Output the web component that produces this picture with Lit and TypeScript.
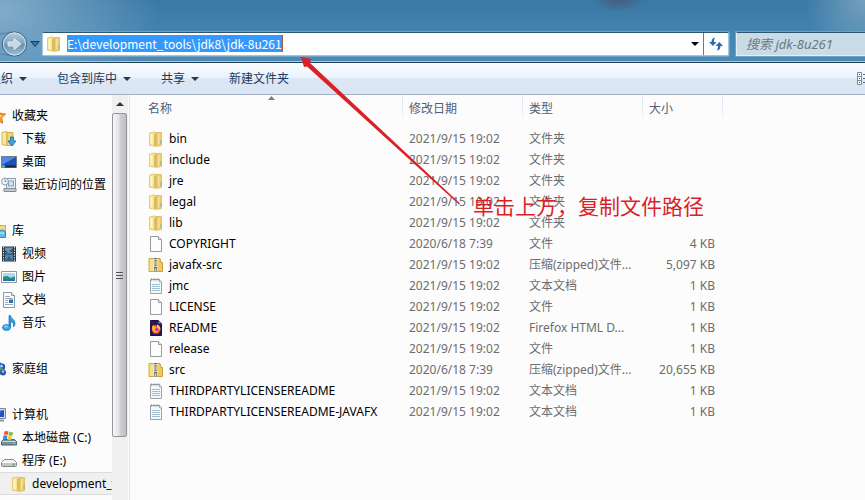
import { LitElement, html, css, svg, nothing } from "lit";
import { customElement } from "lit/decorators.js";

type Icon = keyof typeof icons;

const icons = {
  folder: svg`
    <path d="M1.500 2 7 .8l1 1v13.500l-6.500-1z" fill="#f7e28e" stroke="#e2c468" stroke-width=".8"/>
    <path d="M8 1.500h5.500v13L8 15.300z" fill="#ecd070" stroke="#dcba5a" stroke-width=".8"/>
    <path d="M6 3.500 9 1.500v12L6 15.300z" fill="#d9bd66"/>
    <path d="M2.500 3h2v10.500l-2-.5z" fill="#fff6c4"/>
    <path d="M10 3h1.500v10H10z" fill="#f6e193"/>
    <path d="M13 9v4" stroke="#7fb3a2"/>`,
  file: svg`
    <path d="M2.500.5h8l3 3v12h-11z" fill="#fdfdfd" stroke="#9a9a9a"/>
    <path d="M10.500.5v3h3" fill="#eee" stroke="#9a9a9a"/>`,
  zip: svg`
    <path d="M1 1.500h7v13H1z" fill="#f7df83" stroke="#d0a845"/>
    <path d="M8 1.500h4l1 4h1.500v9H8z" fill="#ecca62" stroke="#c99d3c"/>
    <path d="M7.500 1v14" stroke="#fffbe4" stroke-width="3.500"/>
    <path d="M7.500 1v10" stroke="#555" stroke-width="2.600" stroke-dasharray="1.200 1"/>
    <path d="M6.500 11h2v3.500h-2z" fill="#d9d9d9" stroke="#666" stroke-width=".7"/>`,
  text: svg`
    <path d="M2.500 1.500h9l2 2v12h-11z" fill="#f3f8fb" stroke="#9aa3aa"/>
    <path d="M4 6.500h8M4 8.500h8M4 10.500h8M4 12.500h8" stroke="#a3bfd2"/>
    <path d="M3 1.500h9" stroke="#888" stroke-width="2" stroke-dasharray="1 1.200"/>
    <path d="M11.500 1.500v2.500h2" fill="#fff" stroke="#999" stroke-width=".8"/>`,
  firefox: svg`
    <path d="M2.500.5h8l3 3v12h-11z" fill="#2a1a55" stroke="#1d123b"/>
    <path d="M10.500.5v3h3z" fill="#8d83ad"/>
    <circle cx="8" cy="9.500" r="4.200" fill="#ff5a35"/>
    <path d="M4 6.500c1-1 1-1 2-1.500 0 2 2 2 3 3s2 3 0 4-5-1-5-5.500z" fill="#ffb52d"/>
    <path d="M9 4.500c3 1 4 4 3 6-1-2-2-3-3-3z" fill="#ffcf3f"/>
    <circle cx="8.500" cy="9.500" r="1.500" fill="#8b3ac9"/>`,
  star: svg`<path d="m8 .5 2.300 5 5.200.6-3.900 3.700 1 5.300L8 12.500l-4.600 2.600 1-5.300L.5 6.100l5.200-.6z" fill="#fb9b2c" stroke="#dd6a12"/><path d="m8 3 1.500 4 3.500.4-3 2z" fill="#ffd65a"/>`,
  download: svg`
    <path d="M1 1.500 6 .5v14l-5-1z" fill="#f9e9a5" stroke="#d7b653"/>
    <path d="M6 1.500h6v13H6z" fill="#efd57c" stroke="#d1ab4a"/>
    <path d="M9.500 6h3v4h2.500l-4 5-4-5h2.500z" fill="#3aa6e8" stroke="#1565a8" stroke-width=".8"/>`,
  desktop: svg`
    <path d="M.5 2.500h15v11H.5z" fill="#1f4fb4" stroke="#6f7f91"/>
    <path d="M1 3h14L1 11z" fill="#4f8be6"/>
    <path d="M1 12.500h14" stroke="#16264a" stroke-width="2"/>
    <path d="M1 12.500h3" stroke="#74c4a0" stroke-width="2"/>`,
  recent: svg`
    <path d="M5.500 1.500h9v10h-9z" fill="#e8eef3" stroke="#8d9aa6"/>
    <path d="M7.500 4h5v5h-5z" fill="#cfe2f0" stroke="#5d8fb8" stroke-width=".8"/>
    <path d="M3 11.500h12v3H3z" fill="#c1c6cb" stroke="#858c93"/>
    <circle cx="4" cy="4.500" r="3.400" fill="#f4f7f9" stroke="#8d9aa6"/>
    <path d="M4 2.500v2h1.500" fill="none" stroke="#4e6275" stroke-width=".8"/>`,
  library: svg`
    <path d="M1.500 2.500h14v11h-14z" fill="#f1dc83" stroke="#c9a848"/>
    <path d="M8.500 8.500q4-3 7 0v6h-7z" fill="#63bfe6" stroke="#2d86b5"/>
    <path d="M10 10h4" stroke="#c9eefc"/>`,
  video: svg`
    <path d="M1 .5h14v15H1z" fill="#303840"/>
    <path d="M4 1.500h8v6H4z" fill="#4d9fd8"/><path d="M4 8.500h8v6H4z" fill="#3d8cc9"/>
    <path d="m4 4 3 2-3 2zM12 2l-4 3 4 2zM5 14l3-4 3 4z" fill="#76483a"/>
    <path d="M2.500 1v14M13.500 1v14" stroke="#dce7ee" stroke-dasharray="1.300 1.200"/>`,
  picture: svg`
    <path d="M.5 2.500h15v11H.5z" fill="#fff" stroke="#8d979f"/>
    <path d="M2 4h12v8H2z" fill="#a9dbf3"/>
    <path d="M2 8q4-2 6 0t6-1v5H2z" fill="#2d8c86"/>
    <path d="M2 11q6-2 12 0v1H2z" fill="#2a6fa8"/>`,
  document: svg`
    <path d="M2.500.5h8l3 3v12h-11z" fill="#fbfcfd" stroke="#8c98a3"/>
    <path d="M10.500.5v3h3" fill="#dfe6ec" stroke="#8c98a3"/>
    <path d="M4 4.500h5M4 6.500h8M4 8.500h3M4 10.500h3M4 12.500h8" stroke="#9badbd"/>
    <path d="M8 7.500h4v3.500H8z" fill="#2e6db5"/>`,
  music: svg`
    <path d="M8 .5h1.500c0 3 4.500 4 4.500 8 0 1.500-.6 2.500-1.500 3.500.8-3-.5-4.500-3-5.500v6H8z" fill="#2a9be0" stroke="#1673b8" stroke-width=".7"/>
    <ellipse cx="5.500" cy="12.500" rx="4" ry="3" fill="#36a7e8" stroke="#1673b8" stroke-width=".7"/>
    <ellipse cx="5" cy="11.500" rx="2" ry="1" fill="#8bd2f8"/>`,
  homegroup: svg`
    <circle cx="8" cy="4" r="3.500" fill="#3f7ed0"/><circle cx="11.500" cy="6" r="3.700" fill="#2c55c0"/>
    <circle cx="10" cy="10" r="3.500" fill="#4aa948"/><circle cx="13" cy="11.500" r="3" fill="#2e4fc2"/>
    <circle cx="11.500" cy="5" r="1.500" fill="#a6c8ff"/><circle cx="13" cy="10.500" r="1.200" fill="#a6c8ff"/>`,
  computer: svg`
    <path d="M1.500 1.500h14v10h-14z" fill="#d8dde3" stroke="#7d8893"/>
    <path d="M3 3h11v7H3z" fill="#2553c4"/><path d="M3 3h11L3 8z" fill="#6c9cf0"/>
    <path d="M4 13.500h10" stroke="#8e98a2" stroke-width="2"/>`,
  windisk: svg`
    <path d="M2.500 9.500h11l2 2v3.500H.5v-3.500z" fill="#71949b" stroke="#47666e"/>
    <path d="M1 11.500h14" stroke="#c7dce0"/><path d="M12 13.500h2" stroke="#8df06c"/>
    <path d="M3.500 1.500q2-1 4 0l-.8 3.500q-2-1-4 0z" fill="#ef5a28"/>
    <path d="M8.200 1.800q2 1 4 0l-.8 3.500q-2 1-4 0z" fill="#7dbb35"/>
    <path d="M2.500 5.700q2-1 4 0l-.8 3.500q-2-1-4 0z" fill="#2c8fd8"/>
    <path d="M7.200 6q2 1 4 0l-.8 3.500q-2 1-4 0z" fill="#fbc22b"/>`,
  disk: svg`
    <path d="M3.500 6.500h9l3 3v3q0 1-1 1h-13q-1 0-1-1v-3z" fill="#f1f2f3" stroke="#85898d"/>
    <path d="M1 9.500h14v3.500H1z" fill="#c2c6c9"/><path d="M1 9.500h14" stroke="#fafafa"/>
    <path d="M12.500 10.500v2" stroke="#3fae3c" stroke-width="1.500"/>`,
};

const glyph = (name: Icon) =>
  html`<svg class="icon" viewBox="0 0 16 16" aria-hidden="true">${icons[name]}</svg>`;

const groups: { icon: Icon; label: string; items: { icon: Icon; label: string }[] }[] = [
  { icon: "star", label: "收藏夹", items: [
    { icon: "download", label: "下载" },
    { icon: "desktop", label: "桌面" },
    { icon: "recent", label: "最近访问的位置" },
  ] },
  { icon: "library", label: "库", items: [
    { icon: "video", label: "视频" },
    { icon: "picture", label: "图片" },
    { icon: "document", label: "文档" },
    { icon: "music", label: "音乐" },
  ] },
  { icon: "homegroup", label: "家庭组", items: [] },
  { icon: "computer", label: "计算机", items: [
    { icon: "windisk", label: "本地磁盘 (C:)" },
    { icon: "disk", label: "程序 (E:)" },
  ] },
];

const recent = "2021/9/15 19:02";
const older = "2020/6/18 7:39";
const files: [Icon, string, string, string, string][] = [
  ["folder", "bin", recent, "文件夹", ""],
  ["folder", "include", recent, "文件夹", ""],
  ["folder", "jre", recent, "文件夹", ""],
  ["folder", "legal", recent, "文件夹", ""],
  ["folder", "lib", recent, "文件夹", ""],
  ["file", "COPYRIGHT", older, "文件", "4 KB"],
  ["zip", "javafx-src", recent, "压缩(zipped)文件...", "5,097 KB"],
  ["text", "jmc", recent, "文本文档", "1 KB"],
  ["file", "LICENSE", recent, "文件", "1 KB"],
  ["firefox", "README", recent, "Firefox HTML D...", "1 KB"],
  ["file", "release", recent, "文件", "1 KB"],
  ["zip", "src", older, "压缩(zipped)文件...", "20,655 KB"],
  ["text", "THIRDPARTYLICENSEREADME", recent, "文本文档", "1 KB"],
  ["text", "THIRDPARTYLICENSEREADME-JAVAFX", recent, "文本文档", "1 KB"],
];

const shared = css`
  :host, * { box-sizing: border-box; }
  button, input { font: inherit; margin: 0; padding: 0; border: 0; background: none; }
  .icon { width: 16px; height: 16px; flex: none; display: block; }
`;

@customElement("address-bar")
class AddressBar extends LitElement {
  static styles = [shared, css`
    :host {
      display: flex; align-items: center; height: 63px; padding-top: 25px; flex: none;
      border-bottom: 1px solid #23435d; box-shadow: inset 0 -1px #a5c9e0; overflow: hidden;
      background:
        radial-gradient(ellipse 26px 12px at 618px 0, #4a5575cc, #4a557500),
        radial-gradient(ellipse 160px 100px at 0 10px, #8db4cedd, #8db4ce00),
        radial-gradient(ellipse 60px 60px at 100% 0, #84aac4cc, #84aac400),
        linear-gradient(#3a78a5, #4485b2 60%, #4b8ab5);
    }
    .forward { width: 28px; height: 28px; flex: none; }
    .forward svg { display: block; }
    .history { width: 10px; height: 8px; margin: 0 2px; flex: none; display: flex; }
    .path {
      flex: 1; min-width: 0; height: 24px; display: flex; align-items: center;
      background: #fff; border: 1px solid #9fc6df; border-top-color: #2c5572;
      border-radius: 2px; padding-left: 3px; box-shadow: 0 0 0 1px #6fa3c6;
    }
    .address {
      height: 17px; margin-left: 5px; color: #fff; background: #39f; line-height: 17px;
      field-sizing: content; border-right: 1px solid #a05a3c; outline: 0;
      font-family: "Noto Sans CJK SC", sans-serif; font-size: 12px;
    }
    .drop { margin-left: auto; width: 16px; height: 22px; display: grid; place-items: center; }
    .refresh { width: 25px; height: 22px; border-left: 1px solid #5d7d93; display: grid; place-items: center; }
    .search {
      width: 129px; height: 24px; margin-left: 7px; padding-left: 9px; flex: none;
      background: #cadbe8; border: 1px solid #e3eef6; border-top-color: #2c5572;
      border-right: 0; box-shadow: 0 0 0 1px #6fa3c6; font-style: italic; font-size: 13px; outline: 0;
    }
    .search::placeholder { color: #6b7681; opacity: 1; }
  `];
  render() {
    return html`
      <button class="forward" aria-label="前进">
        <svg width="28" height="28" viewBox="0 0 28 28">
          <defs><linearGradient id="g" x2="0" y2="1"><stop stop-color="#b9cddb"/><stop offset=".5" stop-color="#7fa3bd"/><stop offset=".52" stop-color="#668fae"/><stop offset="1" stop-color="#a3c4da"/></linearGradient></defs>
          <path d="M0 4Q6 4 9 2M0 24q6 0 9 2" fill="none" stroke="#54809f"/>
          <circle cx="14.500" cy="14" r="12.200" fill="url(#g)" stroke="#3d6684"/>
          <circle cx="14.500" cy="14" r="11" fill="none" stroke="#cfe0ec"/>
          <path d="M8 12h6V8.500l7 5.500-7 5.500V16H8z" fill="#c6d8e5" stroke="#dbe7f0"/>
        </svg>
      </button>
      <button class="history" aria-label="最近浏览的位置">
        <svg width="10" height="8" viewBox="0 0 10 8"><path d="M.8 1.500h8.400L5 6.500z" fill="#3974a2" stroke="#173e60"/></svg>
      </button>
      <div class="path">
        ${glyph("folder")}
        <input class="address" aria-label="地址" value="E:\\development_tools\\jdk8\\jdk-8u261" />
        <button class="drop" aria-label="以前的位置"><svg width="8" height="4"><path d="M0 0h8L4 4z"/></svg></button>
        <button class="refresh" aria-label="刷新">
          <svg width="16" height="16" viewBox="0 0 16 16" fill="#2b6cb0">
            <path d="M7 1.500Q3.500 2 3.500 6H1l4 4L8.500 6H6q-.2-2.500 1-4.500z"/>
            <path d="M9 14.500q3.500-.5 3.500-4.500H15l-3.700-4L7.500 10H10q.2 2.500-1 4.500z"/>
          </svg>
        </button>
      </div>
      <input class="search" type="search" aria-label="搜索" placeholder="搜索 jdk-8u261" />
    `;
  }
}

@customElement("command-bar")
class CommandBar extends LitElement {
  static styles = [shared, css`
    :host {
      display: flex; align-items: center; gap: 30px; height: 32px; overflow: hidden; flex: none;
      background: linear-gradient(#fbfdff, #e9f2fb 48%, #dce7f5 50%, #dbe5f3);
      border-bottom: 1px solid #a2b1c5; color: #1e395b;
    }
    button { color: inherit; display: flex; align-items: center; gap: 6px; line-height: 18px; white-space: nowrap; flex: none; }
    button:first-child { margin-left: -11px; }
    .view { margin-left: auto; }
  `];
  render() {
    const caret = html`<svg width="8" height="4"><path d="M0 0h8L4 4z" fill="#1e395b"/></svg>`;
    return html`
      <button>组织 ${caret}</button>
      <button>包含到库中 ${caret}</button>
      <button>共享 ${caret}</button>
      <button>新建文件夹</button>
      <button class="view" aria-label="更改您的视图">
        <svg width="8" height="14" viewBox="0 0 8 14">
          <path d="M.5.5h4v12h-4zM.5 4.500h4M.5 8.500h4" fill="#fff" stroke="#7c8a99"/>
          <path d="M2 2.500h1M2 6.500h1M2 10.500h1" stroke="#334d68"/><path d="M6 2.500h2M6 6.500h2M6 10.500h2" stroke="#566c84"/>
        </svg>
      </button>
    `;
  }
}

@customElement("nav-pane")
class NavPane extends LitElement {
  static styles = [shared, css`
    :host { display: flex; flex: none; width: 130px; overflow: hidden; border-right: 1px solid #d6e5f5; }
    nav { flex: 1; min-width: 0; padding-top: 9px; overflow: hidden; }
    section { margin-bottom: 23px; }
    section:last-child { margin-bottom: 0; }
    a {
      display: flex; align-items: center; gap: 5px; height: 23px; padding-left: 1px;
      color: #000; text-decoration: none; white-space: nowrap; line-height: 18px;
    }
    .root { margin-left: -10px; padding-left: 0; gap: 6px; }
    .child { padding-left: 11px; background: #f0f0f0; border: 1px solid #dcdcdc; border-width: 1px 0; }
    .bar { width: 16px; flex: none; background: #f0f0f0; display: flex; flex-direction: column; margin-right: 1px; }
    .up { height: 18px; width: 16px; flex: none; display: grid; place-items: center; }
    .thumb {
      width: 15px; height: 324px; flex: none; border: 1px solid #96969a; border-radius: 2px;
      background: linear-gradient(90deg, #f6f6f6, #e4e4e6 45%, #cfcfd3 55%, #bebec4);
      display: grid; place-items: center;
    }
  `];
  render() {
    return html`
      <nav>
        ${groups.map((g) => html`<section>
          <a class="root" href="#">${glyph(g.icon)}${g.label}</a>
          ${g.items.map((i) => html`<a href="#">${glyph(i.icon)}${i.label}</a>`)}
          ${g.icon === "computer" ? html`<a class="child" href="#">${glyph("folder")}development_tools</a>` : nothing}
        </section>`)}
      </nav>
      <div class="bar">
        <button class="up" aria-label="向上滚动"><svg width="8" height="4"><path d="M0 4h8L4 0z" fill="#333"/></svg></button>
        <div class="thumb"><svg width="7" height="9"><path d="M0 1.500h7M0 4.500h7M0 7.500h7" stroke="#55555a"/></svg></div>
      </div>
    `;
  }
}

@customElement("file-list")
class FileList extends LitElement {
  static styles = [shared, css`
    :host { display: block; flex: 1; min-width: 0; padding-left: 12px; overflow: hidden; }
    table { border-collapse: separate; border-spacing: 0; table-layout: fixed; width: 581px; }
    .name { width: 261px; } .date, .type { width: 120px; } .size { width: 80px; }
    th {
      position: relative; height: 24px; padding: 4px 6px 0; font-weight: 400; text-align: left; color: #4c607a;
      border-right: 1px solid; border-image: linear-gradient(#dfe8f5, #dfe8f5 60%, #fcfcfc) 1; line-height: 18px;
    }
    .sort { position: absolute; top: 1px; left: 50%; display: block; margin-left: -4px; }
    tbody::before { content: ""; display: block; height: 9px; }
    td { height: 21px; padding: 0 6px; color: #6d6d6d; white-space: nowrap; line-height: 18px; }
    td.size { text-align: right; padding-right: 8px; }
    .label { display: flex; align-items: center; gap: 5px; color: #000; }
  `];
  render() {
    return html`<table>
      <thead><tr>
        <th class="name">名称<svg class="sort" width="7" height="4"><path d="M0 4 3.500 0 7 4z" fill="#5688a8"/></svg></th>
        <th class="date">修改日期</th><th class="type">类型</th><th class="size">大小</th>
      </tr></thead>
      <tbody>${files.map(([icon, name, date, type, size]) => html`<tr>
        <td><div class="label">${glyph(icon)}${name}</div></td>
        <td>${date}</td><td>${type}</td><td class="size">${size}</td>
      </tr>`)}</tbody>
    </table>`;
  }
}

@customElement("app-root")
class AppRoot extends LitElement {
  static styles = css`
    :host {
      display: flex; flex-direction: column; position: relative; height: 100vh; overflow: hidden;
      background: #fcfcfc; font: 12px/18px "Noto Sans", "Noto Sans CJK SC", sans-serif;
    }
    .body { flex: 1; min-height: 0; display: flex; }
    .arrow { position: absolute; left: 298px; top: 54px; pointer-events: none; }
    .note {
      position: absolute; left: 473px; top: 191px; margin: 0; white-space: nowrap;
      color: #dc1f26; font: 21px/28px "Noto Sans CJK SC", sans-serif;
    }
  `;
  render() {
    return html`
      <address-bar></address-bar>
      <command-bar></command-bar>
      <div class="body"><nav-pane></nav-pane><file-list></file-list></div>
      <svg class="arrow" width="164" height="152" viewBox="0 0 164 152" aria-hidden="true">
        <path d="M3 3 13 5 12 9 162 149.500 161 150.500 9 12.500 6 13z" fill="#dc2027"/>
      </svg>
      <p class="note">单击上方，复制文件路径</p>
    `;
  }
}
